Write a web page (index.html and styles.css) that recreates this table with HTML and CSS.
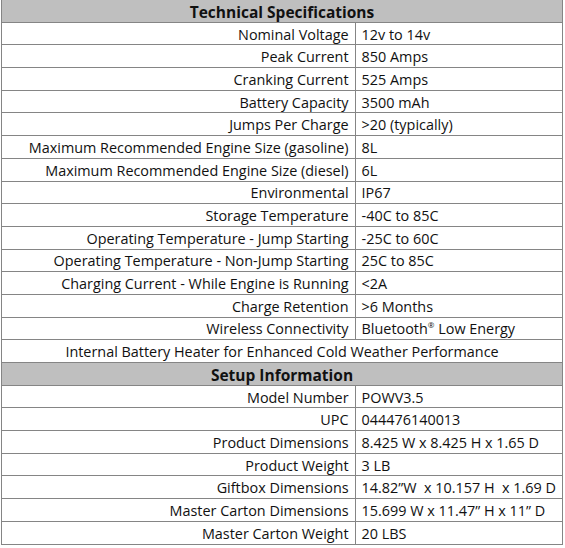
FILE: index.html
```html
<!DOCTYPE html>
<html lang="en">
<head>
    <meta charset="UTF-8">
    <title>Technical Specifications</title>
    <link rel="stylesheet" href="styles.css">
</head>
<body>
    <table class="spec-table">
        <colgroup>
            <col class="label-col">
            <col class="value-col">
        </colgroup>
        <!-- Technical -->
        <tr class="section"><th colspan="2">Technical Specifications</th></tr>
        <tr><td class="label">Nominal Voltage</td><td>12v to 14v</td></tr>
        <tr><td class="label">Peak Current</td><td>850 Amps</td></tr>
        <tr><td class="label">Cranking Current</td><td>525 Amps</td></tr>
        <tr><td class="label">Battery Capacity</td><td>3500 mAh</td></tr>
        <tr><td class="label">Jumps Per Charge</td><td>&gt;20 (typically)</td></tr>
        <tr><td class="label">Maximum Recommended Engine Size (gasoline)</td><td>8L</td></tr>
        <tr><td class="label">Maximum Recommended Engine Size (diesel)</td><td>6L</td></tr>
        <tr><td class="label">Environmental</td><td>IP67</td></tr>
        <tr><td class="label">Storage Temperature</td><td>-40C to 85C</td></tr>
        <tr><td class="label">Operating Temperature - Jump Starting</td><td>-25C to 60C</td></tr>
        <tr><td class="label">Operating Temperature - Non-Jump Starting</td><td>25C to 85C</td></tr>
        <tr><td class="label">Charging Current - While Engine is Running</td><td>&lt;2A</td></tr>
        <tr><td class="label">Charge Retention</td><td>&gt;6 Months</td></tr>
        <tr><td class="label">Wireless Connectivity</td><td>Bluetooth<sup>®</sup> Low Energy</td></tr>
        <tr><td class="full" colspan="2">Internal Battery Heater for Enhanced Cold Weather Performance</td></tr>
        <!-- Setup -->
        <tr class="section"><th colspan="2">Setup Information</th></tr>
        <tr><td class="label">Model Number</td><td>POWV3.5</td></tr>
        <tr><td class="label">UPC</td><td>044476140013</td></tr>
        <tr><td class="label">Product Dimensions</td><td>8.425 W x 8.425 H x 1.65 D</td></tr>
        <tr><td class="label">Product Weight</td><td>3 LB</td></tr>
        <tr><td class="label">Giftbox Dimensions</td><td>14.82”W&nbsp; x 10.157 H&nbsp; x 1.69 D</td></tr>
        <tr><td class="label">Master Carton Dimensions</td><td>15.699 W x 11.47” H x 11” D</td></tr>
        <tr><td class="label">Master Carton Weight</td><td>20 LBS</td></tr>
    </table>
</body>
</html>
```

FILE: styles.css
```css
body {
    margin: 0;
    background: #fff;
    font-family: "Open Sans", sans-serif;
    font-size: 14.4px;
    color: #111;
}

.spec-table {
    border-collapse: collapse;
    width: 562px;
    margin: -1px 0 0 1px;
}

.label-col {
    width: 354px;
}

.spec-table tr {
    height: 22.7px;
}

.spec-table th,
.spec-table td {
    border: 1px solid #858585;
    padding: 2px 6px 0;
    line-height: 18px;
    white-space: nowrap;
}

.section th {
    background: #bfbfbf;
    font-size: 15.5px;
    font-weight: 700;
    color: #111;
    text-align: center;
}

.label {
    text-align: right;
    padding-right: 5px;
}

.full {
    text-align: center;
}

sup {
    font-size: 8px;
    line-height: 0;
}
```
